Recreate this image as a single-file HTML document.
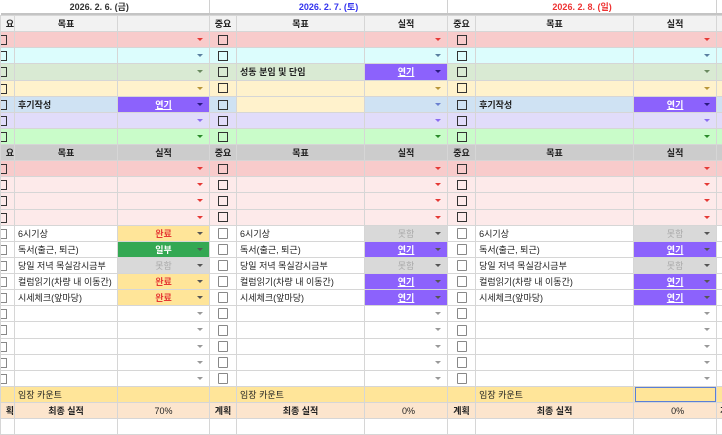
<!DOCTYPE html><html><head><meta charset="utf-8"><style>
body{margin:0;width:722px;height:435px;overflow:hidden;background:#fff;font-family:"Liberation Sans","Noto Sans CJK KR",sans-serif;font-size:9px;color:#222}
table{border-collapse:collapse;table-layout:fixed;width:722px}
td{border:1px solid #d6d6d6;height:15.13px;padding:0 3px;white-space:nowrap;overflow:hidden;position:relative}
tr.dt td{height:12px;border:none;border-right:1px solid #d0d0d0;text-align:center;font-weight:bold;color:#333}
tr.gb td{height:2px;padding:0;background:#c4c4c4;border:none}
.h1 td{background:#f2f2f2;text-align:center;font-weight:bold}
.h2 td{background:#cccccc;text-align:center;font-weight:bold}
.cb{text-align:center;padding:0}
.cb i{display:inline-block;width:8px;height:8px;border:1.5px solid #333;vertical-align:middle}
.t .cb i{border:1px solid #888;width:8px;height:9px;border-radius:1px}
.cl{padding:0}
.cl i{position:absolute;left:-4px;top:3px;width:8px;height:8px;border:1.5px solid #333}
.t .cl i{border:1px solid #888}
.d::after{content:"";position:absolute;right:6px;top:6px;border-left:3px solid transparent;border-right:3px solid transparent;border-top:3px solid var(--a,#888)}
.g{font-weight:bold}
.p1{background:#f8cbcb;--a:#e53935}.p2{background:#dcfdfd;--a:#5a7fa0}.p3{background:#d9ead3;--a:#6a8a60}.p4{background:#fff2cc;--a:#b8963a}.p5{background:#cfe2f3;--a:#6a80d0}.p6{background:#e1dcfa;--a:#8a6cf0}.p7{background:#c9fcc9;--a:#2a8a2a}.p8{background:#fdeaea;--a:#e53935}
.yn{background:#8c62fc!important;color:#fff;text-align:center;font-weight:bold;text-decoration:underline;--a:#2a1a80}
.ok{background:#ffe599!important;color:#e53935;text-align:center;font-weight:bold;--a:#9a8040}
.pt{background:#34a853!important;color:#fff;text-align:center;font-weight:bold;--a:#123}
.no{background:#d9d9d9!important;color:#aaa;text-align:center;--a:#888}
.t td{background:#fff;--a:#555}
.b td{background:#fff;--a:#999}
.im td{background:#ffe599}
.fi td{background:#fce5cd;font-weight:bold;text-align:center}
</style></head><body><table>
<colgroup><col style="width:14px"><col style="width:103px"><col style="width:92px"><col style="width:27px"><col style="width:128px"><col style="width:83px"><col style="width:28px"><col style="width:158px"><col style="width:83px"><col style="width:6px"></colgroup>
<tr class="dt"><td colspan="3" style="padding-right:14px">2026. 2. 6. (금)</td><td colspan="3" style="color:#3333ee">2026. 2. 7. (토)</td><td colspan="3" style="color:#ee3333">2026. 2. 8. (일)</td><td></td></tr>
<tr class="gb"><td colspan="10"></td></tr>
<tr class="h1"><td style="text-align:right;padding:0">요</td><td>목표</td><td></td><td>중요</td><td>목표</td><td>실적</td><td>중요</td><td>목표</td><td>실적</td><td></td></tr>
<tr class="p1"><td class="cl p1"><i></i></td><td class="p1"></td><td class="d p1"></td><td class="cb p1"><i></i></td><td class="p1"></td><td class="d p1"></td><td class="cb p1"><i></i></td><td class="p1"></td><td class="d p1"></td><td class="p1"></td></tr>
<tr><td class="cl p2"><i></i></td><td class="p2"></td><td class="d p2"></td><td class="cb p2"><i></i></td><td class="p2"></td><td class="d p2"></td><td class="cb p2"><i></i></td><td class="p2"></td><td class="d p2"></td><td class="p2"></td></tr>
<tr><td class="cl p3"><i></i></td><td class="p3"></td><td class="d p3"></td><td class="cb p3"><i></i></td><td class="p3 g">성동 분임 및 단임</td><td class="d p3 yn">연기</td><td class="cb p3"><i></i></td><td class="p3"></td><td class="d p3"></td><td class="p3"></td></tr>
<tr><td class="cl p4"><i></i></td><td class="p4"></td><td class="d p4"></td><td class="cb p4"><i></i></td><td class="p4"></td><td class="d p4"></td><td class="cb p4"><i></i></td><td class="p4"></td><td class="d p4"></td><td class="p4"></td></tr>
<tr><td class="cl p5"><i></i></td><td class="p5 g">후기작성</td><td class="d p5 yn">연기</td><td class="cb p5"><i></i></td><td class="p4"></td><td class="d p5"></td><td class="cb p5"><i></i></td><td class="p5 g">후기작성</td><td class="d p5 yn">연기</td><td class="p5"></td></tr>
<tr><td class="cl p6"><i></i></td><td class="p6"></td><td class="d p6"></td><td class="cb p6"><i></i></td><td class="p6"></td><td class="d p6"></td><td class="cb p6"><i></i></td><td class="p6"></td><td class="d p6"></td><td class="p6"></td></tr>
<tr><td class="cl p7"><i></i></td><td class="p7"></td><td class="d p7"></td><td class="cb p7"><i></i></td><td class="p7"></td><td class="d p7"></td><td class="cb p7"><i></i></td><td class="p7"></td><td class="d p7"></td><td class="p7"></td></tr>
<tr class="h2"><td style="text-align:right;padding:0">요</td><td>목표</td><td>실적</td><td>중요</td><td>목표</td><td>실적</td><td>중요</td><td>목표</td><td>실적</td><td></td></tr>
<tr><td class="cl p1"><i></i></td><td class="p1"></td><td class="d p1"></td><td class="cb p1"><i></i></td><td class="p1"></td><td class="d p1"></td><td class="cb p1"><i></i></td><td class="p1"></td><td class="d p1"></td><td class="p1"></td></tr>
<tr><td class="cl p8"><i></i></td><td class="p8"></td><td class="d p8"></td><td class="cb p8"><i></i></td><td class="p8"></td><td class="d p8"></td><td class="cb p8"><i></i></td><td class="p8"></td><td class="d p8"></td><td class="p8"></td></tr>
<tr><td class="cl p8"><i></i></td><td class="p8"></td><td class="d p8"></td><td class="cb p8"><i></i></td><td class="p8"></td><td class="d p8"></td><td class="cb p8"><i></i></td><td class="p8"></td><td class="d p8"></td><td class="p8"></td></tr>
<tr><td class="cl p8"><i></i></td><td class="p8"></td><td class="d p8"></td><td class="cb p8"><i></i></td><td class="p8"></td><td class="d p8"></td><td class="cb p8"><i></i></td><td class="p8"></td><td class="d p8"></td><td class="p8"></td></tr>
<tr class="t"><td class="cl"><i></i></td><td>6시기상</td><td class="d ok">완료</td><td class="cb"><i></i></td><td>6시기상</td><td class="d no">못함</td><td class="cb"><i></i></td><td>6시기상</td><td class="d no">못함</td><td></td></tr>
<tr class="t"><td class="cl"><i></i></td><td>독서(출근, 퇴근)</td><td class="d pt">일부</td><td class="cb"><i></i></td><td>독서(출근, 퇴근)</td><td class="d yn">연기</td><td class="cb"><i></i></td><td>독서(출근, 퇴근)</td><td class="d yn">연기</td><td></td></tr>
<tr class="t"><td class="cl"><i></i></td><td>당일 저녁 목실감시금부</td><td class="d no">못함</td><td class="cb"><i></i></td><td>당일 저녁 목실감시금부</td><td class="d no">못함</td><td class="cb"><i></i></td><td>당일 저녁 목실감시금부</td><td class="d no">못함</td><td></td></tr>
<tr class="t"><td class="cl"><i></i></td><td>컬럼읽기(차량 내 이동간)</td><td class="d ok">완료</td><td class="cb"><i></i></td><td>컬럼읽기(차량 내 이동간)</td><td class="d yn">연기</td><td class="cb"><i></i></td><td>컬럼읽기(차량 내 이동간)</td><td class="d yn">연기</td><td></td></tr>
<tr class="t"><td class="cl"><i></i></td><td>시세체크(앞마당)</td><td class="d ok">완료</td><td class="cb"><i></i></td><td>시세체크(앞마당)</td><td class="d yn">연기</td><td class="cb"><i></i></td><td>시세체크(앞마당)</td><td class="d yn">연기</td><td></td></tr>
<tr class="t b"><td class="cl"><i></i></td><td></td><td class="d"></td><td class="cb"><i></i></td><td></td><td class="d"></td><td class="cb"><i></i></td><td></td><td class="d"></td><td></td></tr>
<tr class="t b"><td class="cl"><i></i></td><td></td><td class="d"></td><td class="cb"><i></i></td><td></td><td class="d"></td><td class="cb"><i></i></td><td></td><td class="d"></td><td></td></tr>
<tr class="t b"><td class="cl"><i></i></td><td></td><td class="d"></td><td class="cb"><i></i></td><td></td><td class="d"></td><td class="cb"><i></i></td><td></td><td class="d"></td><td></td></tr>
<tr class="t b"><td class="cl"><i></i></td><td></td><td class="d"></td><td class="cb"><i></i></td><td></td><td class="d"></td><td class="cb"><i></i></td><td></td><td class="d"></td><td></td></tr>
<tr class="t b"><td class="cl"><i></i></td><td></td><td class="d"></td><td class="cb"><i></i></td><td></td><td class="d"></td><td class="cb"><i></i></td><td></td><td class="d"></td><td></td></tr>
<tr class="im"><td></td><td>임장 카운트</td><td></td><td></td><td>임장 카운트</td><td></td><td></td><td>임장 카운트</td><td style="outline:1.5px solid #5b7fd6;outline-offset:-2px"></td><td></td></tr>
<tr class="fi"><td style="text-align:right;padding:0">획</td><td>최종 실적</td><td style="font-weight:normal">70%</td><td>계획</td><td>최종 실적</td><td style="font-weight:normal;text-align:right;padding-right:32px">0%</td><td>계획</td><td>최종 실적</td><td style="font-weight:normal;text-align:right;padding-right:32px">0%</td><td>계</td></tr>
<tr><td></td><td></td><td></td><td></td><td></td><td></td><td></td><td></td><td></td><td></td></tr>
</table></body></html>
